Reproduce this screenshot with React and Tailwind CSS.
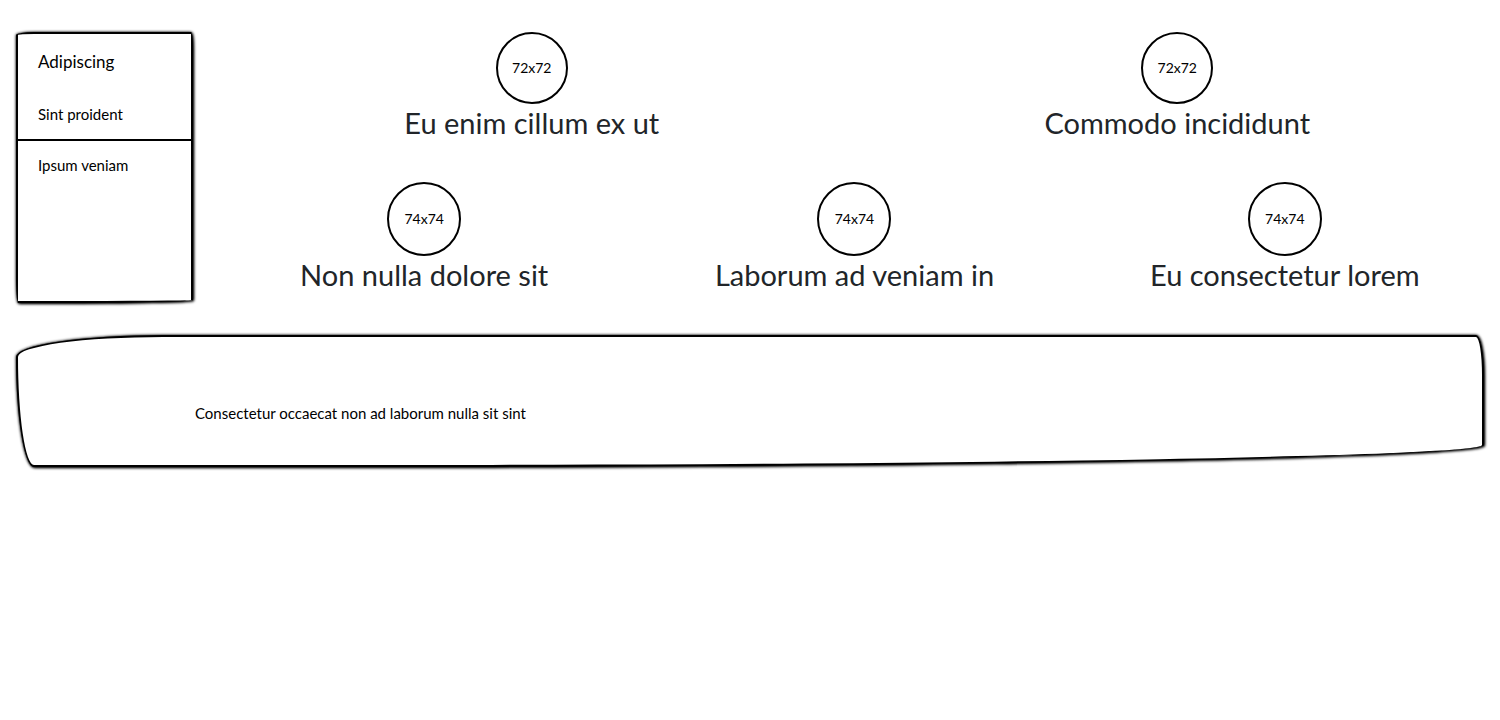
const menu = ['Sint proident', 'Ipsum veniam'];

const pairs = ['Eu enim cillum ex ut', 'Commodo incididunt'];
const triples = ['Non nulla dolore sit', 'Laborum ad veniam in', 'Eu consectetur lorem'];

function Profile({ title, label, size }) {
  return (
    <article className="flex min-w-0 flex-1 flex-col items-center">
      <div className={`${size} flex shrink-0 items-center justify-center rounded-full border-2 border-black text-[14px] leading-6 text-black`}>
        {label}
      </div>
      <h2 className="text-center text-[29px] leading-[38px] text-[#212529]">{title}</h2>
    </article>
  );
}

export default function App() {
  return (
    <main className="flex flex-col gap-8 pt-8 pb-8 font-['Lato','Liberation_Sans',sans-serif] text-black">
      <div className="flex gap-4 pl-4">
        <aside className="min-h-[271px] w-[177px] shrink-0 rounded-[18px_2px_140px_2px/3px_16px_3px_28px] border-2 border-black bg-white shadow-[1px_1px_3px_#000,0_0_3px_#000]">
          <h1 className="px-5 py-4 text-[17px] leading-6">Adipiscing</h1>
          <nav className="divide-y-2 divide-black">
            {menu.map((item) => (
              <a key={item} href="#" className="block px-5 py-3 text-[15px] leading-[25px]">
                {item}
              </a>
            ))}
          </nav>
        </aside>
        <div className="flex min-w-0 flex-1 flex-col gap-10">
          <section className="flex">
            {pairs.map((title) => (
              <Profile key={title} title={title} label="72x72" size="size-[72px]" />
            ))}
          </section>
          <section className="flex">
            {triples.map((title) => (
              <Profile key={title} title={title} label="74x74" size="size-[74px]" />
            ))}
          </section>
        </div>
      </div>
      <section className="mx-4 rounded-[147px_8px_1100px_18px/22px_40px_22px_110px] border-2 border-black bg-white pt-16 pr-8 pb-10 pl-[177px] shadow-[1px_1px_3px_#000,0_0_3px_#000]">
        <p className="text-[15px] leading-6">Consectetur occaecat non ad laborum nulla sit sint</p>
      </section>
    </main>
  );
}
